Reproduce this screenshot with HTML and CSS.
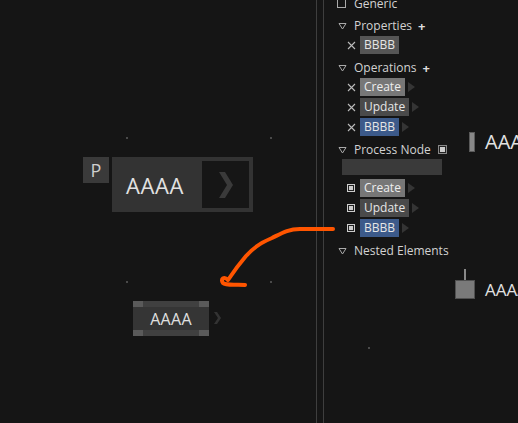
FILE: index.html
```html
<!DOCTYPE html>
<html>
<head>
<meta charset="utf-8">
<link rel="stylesheet" href="styles.css">
</head>
<body>
<div class="app">
  <div class="canvas">
    <span class="dot d1"></span>
    <span class="dot d2"></span>
    <span class="dot d3"></span>
    <span class="dot d4"></span>

    <div class="pbox">P</div>
    <div class="node-big">
      <div class="nb-label">AAAA</div>
      <div class="nb-btn">
        <svg width="14" height="26" viewBox="0 0 14 26"><polygon points="0,0 6,0 14,13 6,26 0,26 8,13" fill="#3a3a3a"/></svg>
      </div>
    </div>

    <div class="node-small">
      <span class="ns-c"></span><span class="ns-b"></span><span class="ns-c"></span>
      <div class="ns-label">AAAA</div>
      <span class="ns-c"></span><span class="ns-b"></span><span class="ns-c"></span>
    </div>
    <svg class="ns-chev" width="7" height="12" viewBox="0 0 7 12"><polygon points="0,0 3,0 7,6 3,12 0,12 4,6" fill="#333"/></svg>
  </div>

  <div class="divider"></div>

  <div class="side">
    <div class="tree">
      <div class="head">
        <span class="slot"><span class="check"></span></span>
        <span class="htext">Generic</span>
      </div>
      <div class="head">
        <span class="slot"><svg class="tri" width="9" height="8" viewBox="0 0 9 8"><polygon points="1,1.5 8,1.5 4.5,7" fill="none" stroke="#aaa" stroke-width="1"/></svg></span>
        <span class="htext">Properties</span>
        <span class="plus">+</span>
      </div>
      <div class="item">
        <span class="islot"><svg width="9" height="9" viewBox="0 0 9 9"><path d="M1 1 L8 8 M8 1 L1 8" stroke="#bbb" stroke-width="1.1"/></svg></span>
        <span class="tag gray">BBBB</span>
      </div>
      <div class="head">
        <span class="slot"><svg class="tri" width="9" height="8" viewBox="0 0 9 8"><polygon points="1,1.5 8,1.5 4.5,7" fill="none" stroke="#aaa" stroke-width="1"/></svg></span>
        <span class="htext">Operations</span>
        <span class="plus">+</span>
      </div>
      <div class="item">
        <span class="islot"><svg width="9" height="9" viewBox="0 0 9 9"><path d="M1 1 L8 8 M8 1 L1 8" stroke="#bbb" stroke-width="1.1"/></svg></span>
        <span class="tag light">Create</span><span class="arrow"></span>
      </div>
      <div class="item">
        <span class="islot"><svg width="9" height="9" viewBox="0 0 9 9"><path d="M1 1 L8 8 M8 1 L1 8" stroke="#bbb" stroke-width="1.1"/></svg></span>
        <span class="tag dark">Update</span><span class="arrow"></span>
      </div>
      <div class="item">
        <span class="islot"><svg width="9" height="9" viewBox="0 0 9 9"><path d="M1 1 L8 8 M8 1 L1 8" stroke="#bbb" stroke-width="1.1"/></svg></span>
        <span class="tag blue">BBBB</span><span class="arrow"></span>
      </div>
      <div class="head">
        <span class="slot"><svg class="tri" width="9" height="8" viewBox="0 0 9 8"><polygon points="1,1.5 8,1.5 4.5,7" fill="none" stroke="#aaa" stroke-width="1"/></svg></span>
        <span class="htext">Process Node</span>
        <span class="pn-icon"><span></span></span>
      </div>
      <div class="input"></div>
      <div class="item first">
        <span class="islot"><span class="sq"><span></span></span></span>
        <span class="tag light">Create</span><span class="arrow"></span>
      </div>
      <div class="item">
        <span class="islot"><span class="sq"><span></span></span></span>
        <span class="tag dark">Update</span><span class="arrow"></span>
      </div>
      <div class="item">
        <span class="islot"><span class="sq"><span></span></span></span>
        <span class="tag blue">BBBB</span><span class="arrow"></span>
      </div>
      <div class="head">
        <span class="slot"><svg class="tri" width="9" height="8" viewBox="0 0 9 8"><polygon points="1,1.5 8,1.5 4.5,7" fill="none" stroke="#aaa" stroke-width="1"/></svg></span>
        <span class="htext">Nested Elements</span>
      </div>
    </div>

    <span class="dot d5"></span>

    <div class="rnode r1">
      <span class="bar"></span>
      <span class="rlabel big">AAAA</span>
    </div>
    <div class="rnode r2">
      <span class="pin"><span class="stem"></span><span class="box"></span></span>
      <span class="rlabel mid">AAAA</span>
    </div>
  </div>

  <svg class="stroke" width="518" height="423" viewBox="0 0 518 423">
    <path d="M333 229 L300 229 C288 229 282 233 272 238 C262 242 254 247 246 256 C240 263 234 271 228 280 C224 276 220 279 223 283 C226 286 238 284 245 285" fill="none" stroke="#ff5500" stroke-width="4" stroke-linecap="round" stroke-linejoin="round"/>
  </svg>
</div>
</body>
</html>
```

FILE: styles.css
```css
html, body {
  margin: 0;
  padding: 0;
}
body {
  background: #151515;
  font-family: "Open Sans", "Noto Sans", sans-serif;
  color: #d0d0d0;
  overflow: hidden;
}
.app {
  position: relative;
  display: flex;
  width: 518px;
  height: 423px;
  overflow: hidden;
}
.canvas {
  position: relative;
  width: 316px;
  height: 423px;
  flex: none;
}
.divider {
  width: 6px;
  flex: none;
  border-left: 1px solid #3e3e3e;
  border-right: 1px solid #3e3e3e;
}
.side {
  position: relative;
  flex: 1;
  height: 423px;
}
.dot {
  position: absolute;
  width: 2px;
  height: 2px;
  background: #4a4a4a;
}
.d1 { left: 126px; top: 137px; }
.d2 { left: 270px; top: 137px; }
.d3 { left: 126px; top: 281px; }
.d4 { left: 270px; top: 281px; }
.d5 { left: 44px; top: 347px; }

.pbox {
  position: absolute;
  left: 83px;
  top: 157px;
  width: 26px;
  height: 26px;
  background: #3a3a3a;
  color: #cfcfcf;
  font-size: 18px;
  display: flex;
  align-items: center;
  justify-content: center;
}
.node-big {
  position: absolute;
  left: 112px;
  top: 157px;
  width: 141px;
  height: 55px;
  background: #333;
  display: flex;
  align-items: center;
}
.nb-label {
  flex: 1;
  padding-left: 14px;
  font-size: 22px;
  color: #e2e2e2;
  letter-spacing: 0.6px;
}
.nb-btn {
  width: 47px;
  height: 47px;
  margin-right: 4px;
  background: #161616;
  display: flex;
  align-items: center;
  justify-content: center;
}
.node-small {
  position: absolute;
  left: 133px;
  top: 301px;
  width: 76px;
  height: 35px;
  display: grid;
  grid-template-columns: 10px 1fr 10px;
  grid-template-rows: 6px 1fr 6px;
}
.ns-c { background: #5a5a5a; }
.ns-b { background: #404040; }
.ns-label {
  grid-column: 1 / 4;
  background: #353535;
  color: #e0e0e0;
  font-size: 16px;
  letter-spacing: 0.3px;
  display: flex;
  align-items: center;
  justify-content: center;
  line-height: 1;
}
.ns-chev {
  position: absolute;
  left: 214px;
  top: 312px;
}

.tree {
  display: flex;
  flex-direction: column;
  padding-left: 13px;
  margin-top: -9px;
  font-size: 12px;
}
.head {
  display: flex;
  align-items: center;
  height: 19px;
  margin-top: 3px;
}
.slot {
  width: 17px;
  flex: none;
  display: flex;
  align-items: center;
}
.tri { margin-left: 1px; }
.check {
  width: 7px;
  height: 7px;
  border: 1px solid #aaa;
}
.htext {
  color: #d2d2d2;
}
.plus {
  margin-left: 6px;
  font-weight: 700;
  font-size: 13px;
  color: #ddd;
}
.pn-icon {
  margin-left: 7px;
  width: 7px;
  height: 7px;
  border: 1px solid #888;
  display: flex;
  align-items: center;
  justify-content: center;
  background: #222;
}
.pn-icon span {
  width: 5px;
  height: 5px;
  background: #ccc;
}
.input {
  width: 100px;
  height: 16px;
  margin-left: 5px;
  background: #3a3a3a;
}
.item {
  display: flex;
  align-items: center;
  height: 20px;
  padding-left: 10px;
}
.item.first { margin-top: 3px; }
.islot {
  width: 13px;
  flex: none;
  display: flex;
  align-items: center;
}
.sq {
  width: 6px;
  height: 6px;
  border: 1px solid #ccc;
  background: #222;
  display: flex;
  align-items: center;
  justify-content: center;
}
.sq span {
  width: 4px;
  height: 4px;
  background: #ccc;
}
.tag {
  height: 18px;
  line-height: 18px;
  padding: 0 4px;
  color: #e6e6e6;
}
.tag.gray { background: #555; }
.tag.light { background: #777; color: #eee; }
.tag.dark { background: #4a4a4a; }
.tag.blue { background: #3c5a8a; }
.arrow {
  width: 0;
  height: 0;
  margin-left: 3px;
  border-top: 5px solid transparent;
  border-bottom: 5px solid transparent;
  border-left: 7px solid #353535;
}

.rnode {
  position: absolute;
  display: flex;
  align-items: center;
}
.r1 { left: 145px; top: 128px; }
.r2 { left: 131px; top: 266px; }
.bar {
  width: 4px;
  height: 18px;
  background: #888;
  border: 1px solid #5a5a5a;
}
.rlabel {
  color: #e2e2e2;
  margin-left: 10px;
  white-space: nowrap;
}
.rlabel.big { font-size: 20px; }
.rlabel.mid { font-size: 17px; margin-top: 12px; }
.pin {
  display: flex;
  flex-direction: column;
  align-items: center;
}
.stem {
  width: 2px;
  height: 11px;
  background: #888;
}
.box {
  width: 18px;
  height: 17px;
  background: #7a7a7a;
  border: 1px solid #505050;
}
.stroke {
  position: absolute;
  left: 0;
  top: 0;
  pointer-events: none;
}
```
